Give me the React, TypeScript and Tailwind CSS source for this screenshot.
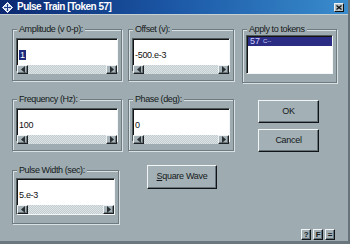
import React from "react";

const font = "font-['Liberation_Sans',Arial,sans-serif]";

function Arrow({ dir }: { dir: "l" | "r" }) {
  return (
    <svg width="4" height="7" viewBox="0 0 4 7">
      {dir === "l" ? (
        <polygon points="4,0 0,3.5 4,7" fill="#2a2f33" />
      ) : (
        <polygon points="0,0 4,3.5 0,7" fill="#2a2f33" />
      )}
    </svg>
  );
}

function ScrollBar() {
  return (
    <div className="flex h-[12px] items-stretch">
      <div className="flex w-[11px] items-center justify-center border border-t-[#eef2f3] border-l-[#eef2f3] border-b-[#1d2124] border-r-[#1d2124] bg-[#a7b4b9] shadow-[inset_-1px_-1px_0_#6c787d]">
        <Arrow dir="l" />
      </div>
      <div className="flex-1 bg-[repeating-conic-gradient(#dde4e6_0%_25%,#c3ccd0_0%_50%)] bg-[length:2px_2px]" />
      <div className="flex w-[11px] items-center justify-center border border-t-[#eef2f3] border-l-[#eef2f3] border-b-[#1d2124] border-r-[#1d2124] bg-[#a7b4b9] shadow-[inset_-1px_-1px_0_#6c787d]">
        <Arrow dir="r" />
      </div>
    </div>
  );
}

function EditField({
  value,
  selected,
  height = "h-[34px]",
}: {
  value: string;
  selected?: boolean;
  height?: string;
}) {
  return (
    <div
      className={`flex ${height} w-full flex-col border border-t-[#4f5a5e] border-l-[#4f5a5e] border-b-[#f4f7f8] border-r-[#f4f7f8] bg-white shadow-[inset_1px_1px_0_#141414]`}
    >
      <div className="flex-1 pl-[2px] pt-[2px]">
        <span
          className={`text-[9px] leading-[10px] tracking-[-0.3px] ${
            selected ? "bg-[#1e2b7c] px-[1px] text-white" : "text-[#111]"
          }`}
        >
          {value}
        </span>
      </div>
      <ScrollBar />
    </div>
  );
}

function Group({
  label,
  width,
  children,
  className = "",
}: {
  label: string;
  width: string;
  children: React.ReactNode;
  className?: string;
}) {
  return (
    <fieldset
      className={`${width} ${className} border border-[#6d7a80] px-[3px] pb-[8px] shadow-[inset_1px_1px_0_#d9e1e4,1px_1px_0_#d9e1e4]`}
    >
      <legend className="ml-[1px] h-[10px] bg-[#9eacb1] px-[2px] text-[9px] leading-[10px] tracking-[-0.4px] text-[#15191b]">
        {label}
      </legend>
      {children}
    </fieldset>
  );
}

function Button({
  children,
  className = "",
}: {
  children: React.ReactNode;
  className?: string;
}) {
  return (
    <div
      className={`flex items-center justify-center border border-t-[#f2f5f6] border-l-[#f2f5f6] border-b-[#111416] border-r-[#111416] bg-[#a3b0b5] text-[9px] tracking-[-0.3px] text-[#15191b] shadow-[inset_-1px_-1px_0_#67737a] ${className}`}
    >
      {children}
    </div>
  );
}

export default function App() {
  return (
    <div
      className={`${font} flex h-[244px] w-[350px] flex-col overflow-hidden border-r-2 border-b-[3px] border-r-[#66737a] border-b-[#6a777c] bg-[#9eacb1]`}
    >
      {/* title bar */}
      <div className="flex h-[14px] items-center bg-linear-to-r from-[#0c2870] via-[#1c58a6] to-[#3a8ccd] pl-[2px] pr-[4px]">
        <svg width="11" height="11" viewBox="0 0 11 11">
          <polygon points="5.5,0.5 10.5,5.5 5.5,10.5 0.5,5.5" fill="#e6ecfa" stroke="#ffffff" />
          <path d="M5.5 2.5 V8.5 M2.5 5.5 H8.5" stroke="#1b3a8c" strokeWidth="1" />
          <polygon points="5.5,1.8 4.2,3.3 6.8,3.3" fill="#1b3a8c" />
          <polygon points="5.5,9.2 4.2,7.7 6.8,7.7" fill="#1b3a8c" />
          <polygon points="1.8,5.5 3.3,4.2 3.3,6.8" fill="#1b3a8c" />
          <polygon points="9.2,5.5 7.7,4.2 7.7,6.8" fill="#1b3a8c" />
        </svg>
        <span className="ml-[4px] text-[10px] font-bold leading-[14px] tracking-[-0.5px] text-white">
          Pulse Train [Token 57]
        </span>
        <div className="ml-auto flex h-[9px] w-[10px] items-center justify-center border border-t-[#eef2f3] border-l-[#eef2f3] border-b-[#111] border-r-[#111] bg-[#b6c1c5]">
          <svg width="6" height="5" viewBox="0 0 6 5">
            <path d="M0.5 0.5 L5.5 4.5 M5.5 0.5 L0.5 4.5" stroke="#111" strokeWidth="1.3" />
          </svg>
        </div>
      </div>
      <div className="h-[1px] bg-[#c6d0d3]" />

      {/* body */}
      <div className="flex flex-col pl-[12px] pt-[9px]">
        {/* row 1 */}
        <div className="flex items-start">
          <Group label="Amplitude (v 0-p):" width="w-[110px]">
            <div className="mt-[4px]">
              <EditField value="1" selected />
            </div>
          </Group>
          <Group label="Offset (v):" width="w-[106px]" className="ml-[6px]">
            <div className="mt-[4px]">
              <EditField value="-500.e-3" />
            </div>
          </Group>
          <Group label="Apply to tokens" width="w-[95px]" className="ml-[8px] pb-[6px]">
            <div className="mt-[1px] h-[39px] w-full border border-t-[#4f5a5e] border-l-[#4f5a5e] border-b-[#f4f7f8] border-r-[#f4f7f8] bg-white shadow-[inset_1px_1px_0_#141414]">
              <div className="ml-[1px] mt-[1px] flex h-[9px] items-center bg-[#2b2d84] pl-[2px] text-[#cfd0ff]">
                <span className="text-[9px] leading-[9px]">57</span>
                <span className="ml-[3px] text-[6px] leading-[9px]">C--</span>
              </div>
            </div>
          </Group>
        </div>

        {/* row 2 */}
        <div className="mt-[11px] flex items-start">
          <Group label="Frequency (Hz):" width="w-[110px]">
            <div className="mt-[4px]">
              <EditField value="100" />
            </div>
          </Group>
          <Group label="Phase (deg):" width="w-[106px]" className="ml-[6px]">
            <div className="mt-[4px]">
              <EditField value="0" />
            </div>
          </Group>
          <div className="ml-[24px] mt-[6px] flex flex-col gap-[6px]">
            <Button className="h-[23px] w-[61px]">OK</Button>
            <Button className="h-[23px] w-[61px]">Cancel</Button>
          </div>
        </div>

        {/* row 3 */}
        <div className="mt-[13px] flex items-start">
          <Group label="Pulse Width (sec):" width="w-[107px]">
            <div className="mt-[3px]">
              <EditField value="5.e-3" height="h-[37px]" />
            </div>
          </Group>
          <Button className="ml-[28px] h-[24px] w-[70px]">
            <span>
              <span className="underline">S</span>quare Wave
            </span>
          </Button>
        </div>

        {/* bottom tool buttons */}
        <div className="mt-[5px] flex justify-end gap-[2px] pr-[13px]">
          <Button className="h-[11px] w-[10px] !text-[8px] font-bold">?</Button>
          <Button className="h-[11px] w-[10px] !text-[8px] font-bold">F</Button>
          <Button className="h-[11px] w-[10px] !text-[8px] font-bold">=</Button>
        </div>
      </div>
    </div>
  );
}
